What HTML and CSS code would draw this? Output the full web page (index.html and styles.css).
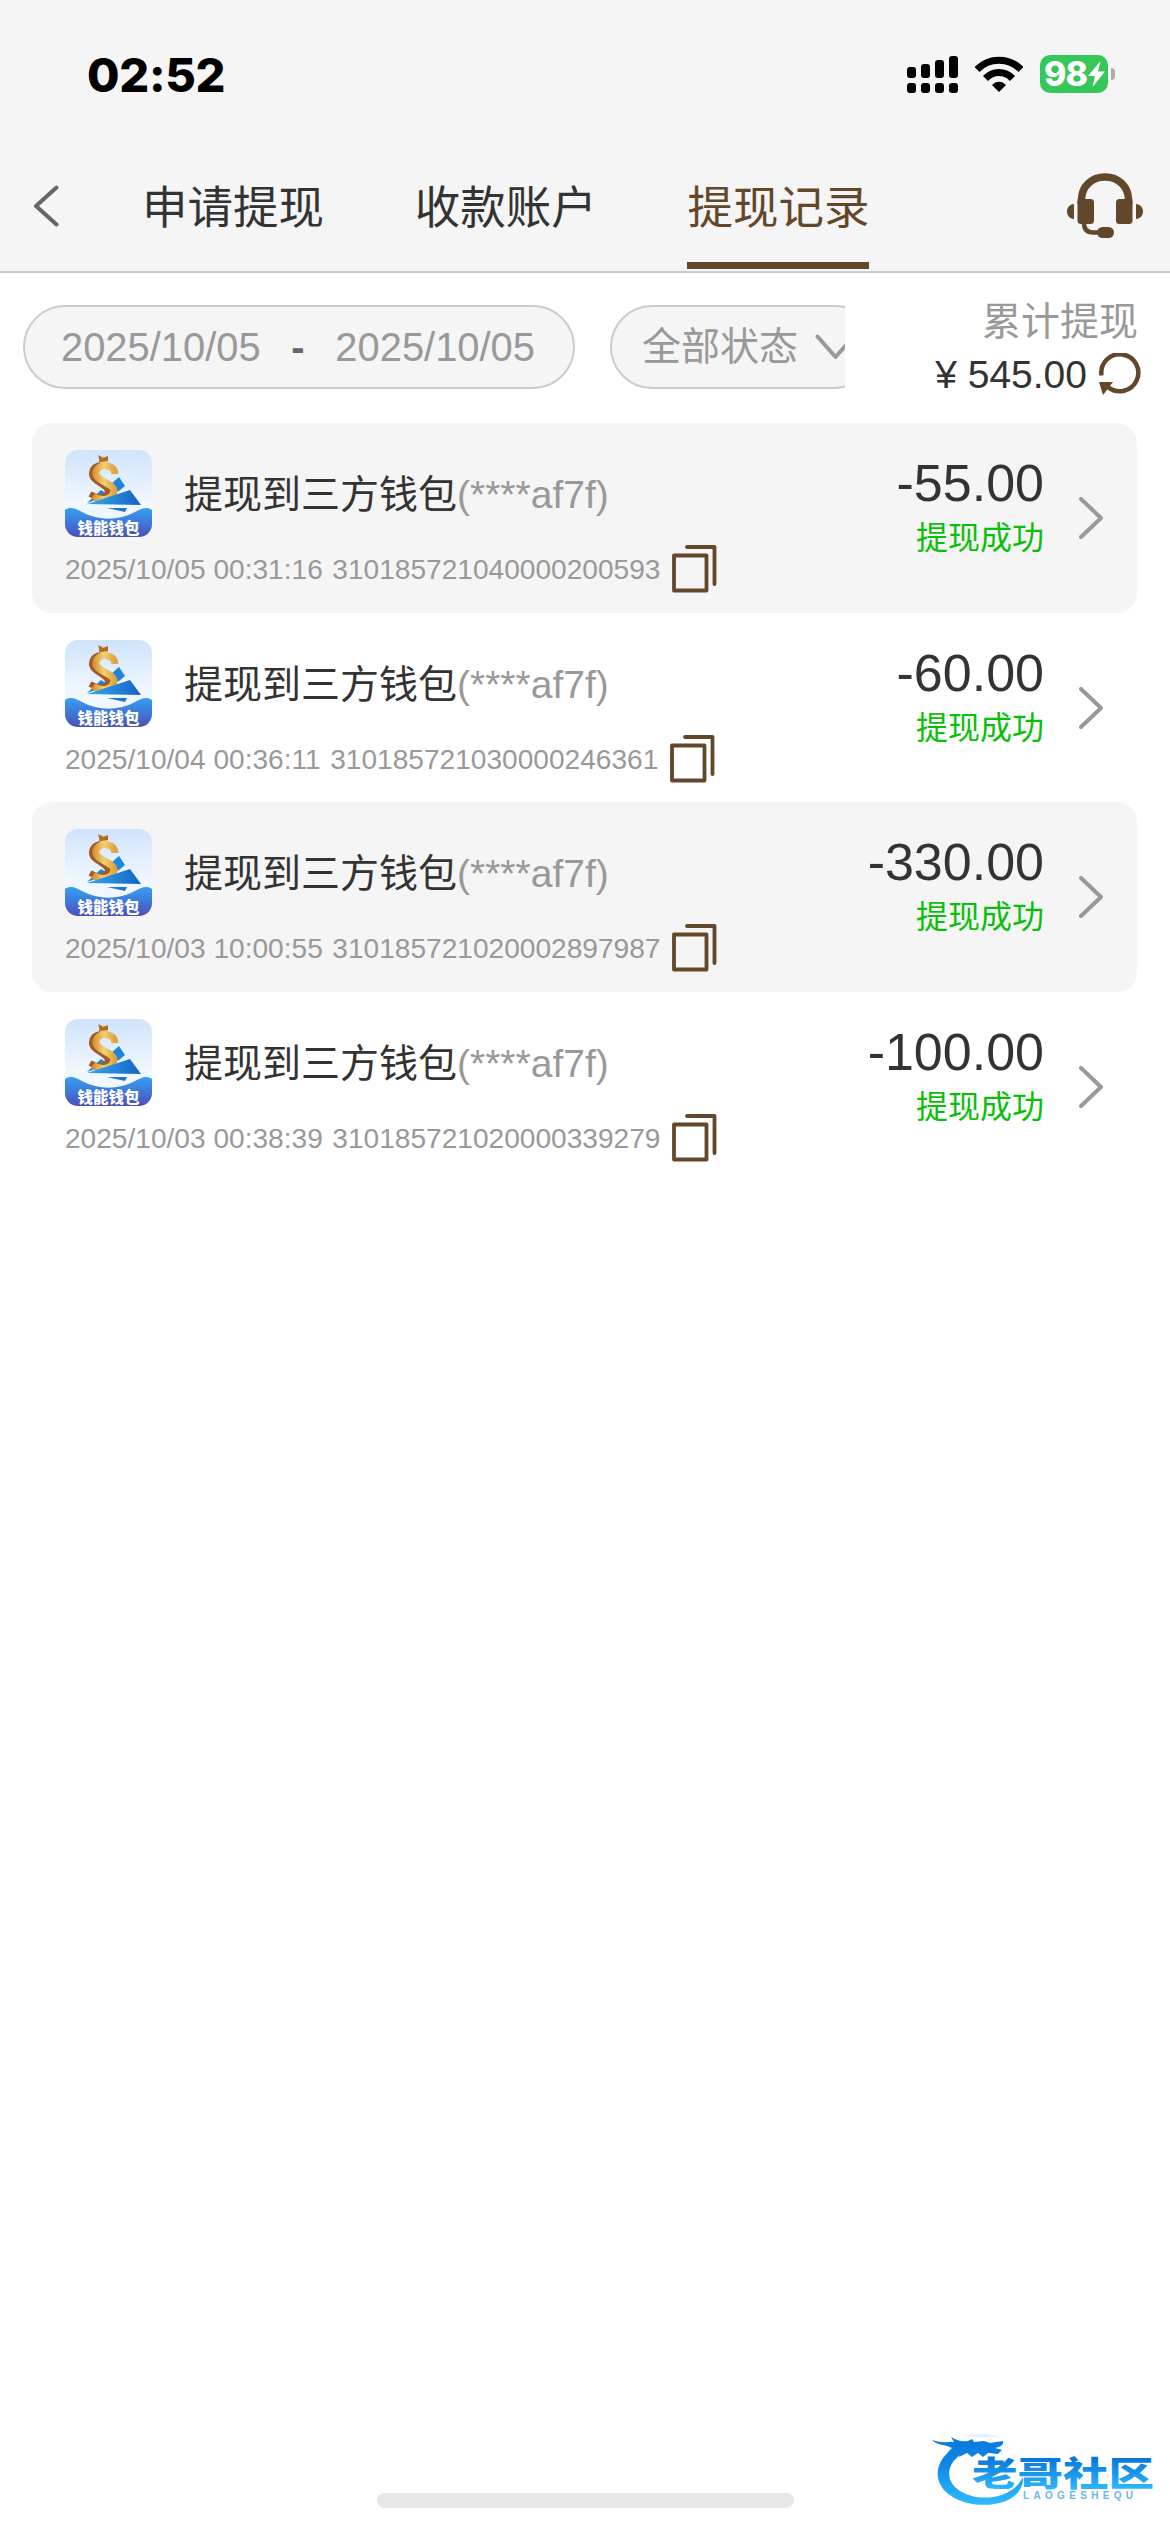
FILE: index.html
```html
<!DOCTYPE html>
<html lang="zh-CN">
<head>
    <meta charset="UTF-8">
    <meta name="viewport" content="width=device-width, initial-scale=1.0">
    <title>提现记录</title>
    <link rel="stylesheet" href="styles.css">
</head>
<body>
    <!-- shared icons -->
    <svg class="sprite" width="0" height="0">
        <defs>
            <linearGradient id="sky" x1="0" y1="0" x2="0" y2="1">
                <stop offset="0" stop-color="#cfe4fc"/>
                <stop offset="0.6" stop-color="#f1f7fe"/>
            </linearGradient>
            <linearGradient id="wave" x1="0" y1="0" x2="0" y2="1">
                <stop offset="0" stop-color="#36a0f0"/>
                <stop offset="0.55" stop-color="#3f74d6"/>
                <stop offset="1" stop-color="#4f50b4"/>
            </linearGradient>
            <linearGradient id="gold" x1="0" y1="0" x2="1" y2="0">
                <stop offset="0" stop-color="#d98f2e"/>
                <stop offset="0.5" stop-color="#f3cf74"/>
                <stop offset="1" stop-color="#dfa23e"/>
            </linearGradient>
            <linearGradient id="sail" x1="0" y1="0" x2="1" y2="0">
                <stop offset="0" stop-color="#35a9ee"/>
                <stop offset="1" stop-color="#1563c4"/>
            </linearGradient>
        </defs>
        <symbol id="icon-wallet" viewBox="0 0 87 87">
            <rect width="87" height="87" fill="url(#sky)"/>
            <path d="M46 34l8-7 6 9-6 5-9 4zM22 53l14-13 8 5z" fill="#1e86dc"/>
            <path d="M44 17C38 13 28 15 27 23c-1 9 16 11 16 19-1 6-9 7-18 2M37 14l1-7" fill="none" stroke="#a05a28" stroke-width="6"/>
            <path d="M50 24C49 13 33 13 31 22c-2 9 18 11 18 19-1 9-13 11-21 5M38 14l2-7" fill="none" stroke="url(#gold)" stroke-width="7"/>
            <path d="M33 5l5 3 5-2v5l-8 1z" fill="#b26a27"/>
            <path d="M22 54L65 40 76 55z" fill="url(#sail)"/>
            <path d="M42 58h20l-2 4z" fill="#1d78d4"/>
            <path d="M0 60c6-4 11-1 17 2 17 9 36 9 53 0 6-3 11-6 17-2v27H0z" fill="url(#wave)"/>
        </symbol>
        <symbol id="icon-copy" viewBox="0 0 45 48">
            <path d="M2 10.500h32.500V45.500H2zM15 2h27.500v37" fill="none" stroke="#63472a" stroke-width="3.800" stroke-linecap="round" stroke-linejoin="round"/>
        </symbol>
        <symbol id="icon-arrow" viewBox="0 0 24 42">
            <path d="M2 2l20 19L2 40" fill="none" stroke="#999" stroke-width="4" stroke-linecap="round" stroke-linejoin="round"/>
        </symbol>
    </svg>

    <header class="header">
        <div class="status-bar">
            <span class="time">02:52</span>
            <div class="status-icons">
                <svg class="signal" viewBox="0 0 51 37">
                    <rect x="0" y="11" width="9" height="11" rx="3"/>
                    <rect x="14" y="8" width="9" height="14" rx="3"/>
                    <rect x="28" y="4" width="9" height="18" rx="3"/>
                    <rect x="42" y="0" width="9" height="22" rx="3"/>
                    <rect x="0" y="27" width="9" height="10" rx="3"/>
                    <rect x="14" y="27" width="9" height="10" rx="3"/>
                    <rect x="28" y="27" width="9" height="10" rx="3"/>
                    <rect x="42" y="27" width="9" height="10" rx="3"/>
                </svg>
                <svg class="wifi" viewBox="0 0 48 36">
                    <path d="M2 13.500C14 1 34 1 46 13.500M10.500 22.500C18 14.500 30 14.500 37.500 22.500" fill="none" stroke="#000" stroke-width="7"/>
                    <path d="M17 29c4-4.500 10-4.500 14 0l-7 7z"/>
                </svg>
                <div class="battery">
                    <span>98</span>
                    <svg class="bolt" viewBox="0 0 17 26"><path d="M12.500 0L0 15h7L4.500 26 17 10.500h-7z"/></svg>
                </div>
                <i class="battery-cap"></i>
            </div>
        </div>
        <nav class="nav">
            <svg class="back" viewBox="0 0 26 42"><path d="M23.500 2.500L3 21l20.500 18.500"/></svg>
            <div class="tabs">
                <a class="tab">申请提现</a>
                <a class="tab">收款账户</a>
                <a class="tab active">提现记录</a>
            </div>
            <svg class="service" viewBox="0 0 76 65">
                <path d="M14.500 30v-3C14.500 13 25 4 38 4s23.500 9 23.500 23v3" fill="none" stroke="#63472a" stroke-width="7.500"/>
                <rect x="10.500" y="26" width="16.500" height="25" rx="3.500"/>
                <rect x="49" y="26" width="16.500" height="25" rx="3.500"/>
                <path d="M10.700 26h7v6h-7zM58.300 26h7v6h-7z"/>
                <path d="M7 31v15C2.500 45.500 0 42.500 0 38.500S2.500 31.500 7 31zM69 31v15c4.500-.5 7-3.500 7-7.500s-2.500-7-7-7.500z"/>
                <path d="M17 50c0 6 3 9.500 9 9.500h7" fill="none" stroke="#63472a" stroke-width="4.500"/>
                <rect x="30" y="54" width="17" height="11" rx="5.500"/>
            </svg>
        </nav>
    </header>

    <section class="filters">
        <div class="date-range">
            <span>2025/10/05</span>
            <span class="dash">-</span>
            <span>2025/10/05</span>
        </div>
        <div class="status-wrap">
            <div class="status-select">
                <span>全部状态</span>
                <svg class="down" viewBox="0 0 41 26"><path d="M2.500 2.500L20.500 23 38.500 2.500"/></svg>
            </div>
        </div>
        <div class="total">
            <div class="total-label">累计提现</div>
            <div class="total-value">
                <span>¥ 545.00</span>
                <svg class="refresh" viewBox="0 0 42 42">
                    <path d="M2.500 22.500A18.500 18.500 0 1 1 9 34" fill="none" stroke="#63472a" stroke-width="4.500"/>
                    <path d="M0 29h14L4 42z" fill="#63472a"/>
                </svg>
            </div>
        </div>
    </section>

    <main class="list">
        <div class="record">
            <div class="logo"><svg><use href="#icon-wallet"/></svg><span>钱能钱包</span></div>
            <div class="title">提现到三方钱包<span>(****af7f)</span></div>
            <div class="meta"><span>2025/10/05 00:31:16</span><span>310185721040000200593</span><svg class="copy"><use href="#icon-copy"/></svg></div>
            <div class="amount"><b>-55.00</b><em>提现成功</em></div>
            <svg class="arrow"><use href="#icon-arrow"/></svg>
        </div>
        <div class="record">
            <div class="logo"><svg><use href="#icon-wallet"/></svg><span>钱能钱包</span></div>
            <div class="title">提现到三方钱包<span>(****af7f)</span></div>
            <div class="meta"><span>2025/10/04 00:36:11</span><span>310185721030000246361</span><svg class="copy"><use href="#icon-copy"/></svg></div>
            <div class="amount"><b>-60.00</b><em>提现成功</em></div>
            <svg class="arrow"><use href="#icon-arrow"/></svg>
        </div>
        <div class="record">
            <div class="logo"><svg><use href="#icon-wallet"/></svg><span>钱能钱包</span></div>
            <div class="title">提现到三方钱包<span>(****af7f)</span></div>
            <div class="meta"><span>2025/10/03 10:00:55</span><span>310185721020002897987</span><svg class="copy"><use href="#icon-copy"/></svg></div>
            <div class="amount"><b>-330.00</b><em>提现成功</em></div>
            <svg class="arrow"><use href="#icon-arrow"/></svg>
        </div>
        <div class="record">
            <div class="logo"><svg><use href="#icon-wallet"/></svg><span>钱能钱包</span></div>
            <div class="title">提现到三方钱包<span>(****af7f)</span></div>
            <div class="meta"><span>2025/10/03 00:38:39</span><span>310185721020000339279</span><svg class="copy"><use href="#icon-copy"/></svg></div>
            <div class="amount"><b>-100.00</b><em>提现成功</em></div>
            <svg class="arrow"><use href="#icon-arrow"/></svg>
        </div>
    </main>

    <div class="home-bar"></div>

    <svg class="watermark" viewBox="0 0 230 80">
        <defs>
            <linearGradient id="mark" gradientUnits="userSpaceOnUse" x1="0" y1="5" x2="0" y2="75">
                <stop offset="0" stop-color="#0a78dc"/>
                <stop offset="0.4" stop-color="#0f86e6"/>
                <stop offset="1" stop-color="#2fbcff"/>
            </linearGradient>
            <linearGradient id="markText" gradientUnits="userSpaceOnUse" x1="0" y1="29" x2="0" y2="58">
                <stop offset="0" stop-color="#0878dc"/>
                <stop offset="1" stop-color="#2bb5fd"/>
            </linearGradient>
        </defs>
        <path d="M30 15C-2 29-1 66 42 74c28 4 52-6 51-27-7 15-26 23-47 20C14 61 10 34 37 21z" fill="url(#mark)"/>
        <path d="M2 10c8 3 14 2 22 2l-3-5c7 4 11 5 17 4l4-2 2 3 10-1 6 2 13-2c1 4-3 6-8 7l7 2-4 4-10-1-5 4-5-4-6 4-5-4-8 4 2-7c-6 0-10 2-14 3l5-5C14 14 6 15 2 10z" fill="url(#mark)"/>
        <path d="M28 3c12 5 26-4 42 5-12-3-24 3-42-5z" fill="#e3f1fc"/>
        <text class="mark-name" x="42" y="56" textLength="182" lengthAdjust="spacingAndGlyphs" fill="url(#markText)">老哥社区</text>
        <text class="mark-sub" x="93" y="68.500" textLength="110">LAOGESHEQU</text>
    </svg>
</body>
</html>
```
FILE: styles.css
```css
* {
    box-sizing: border-box;
}
body {
    position: relative;
    margin: 0;
    height: 2532px;
    overflow: hidden;
    background: #fff;
    color: #333;
    font-family: "Liberation Sans", "Noto Sans CJK SC", sans-serif;
}
svg {
    display: block;
    flex: none;
}
.sprite {
    position: absolute;
}
.header {
    height: 273px;
    background: #f5f5f5;
    border-bottom: 2px solid #ccc;
}

/* status bar */
.status-bar {
    display: flex;
    justify-content: space-between;
    height: 141px;
    padding: 55px 55px 0 87px;
}
.time {
    font: 800 47px/39px Inter, sans-serif;
    letter-spacing: -0.300px;
    color: #000;
}
.status-icons {
    display: flex;
    height: 38px;
    align-items: center;
}
.signal {
    width: 51px;
    height: 37px;
    margin-right: 17px;
}
.wifi {
    width: 48px;
    height: 36px;
    margin-right: 17px;
}
.battery {
    display: flex;
    align-items: center;
    width: 68px;
    height: 38px;
    padding-left: 4px;
    border-radius: 10px;
    background: #35c759;
    color: #fff;
    font: 800 34px/38px Inter, sans-serif;
    letter-spacing: -1px;
}
.battery span {
    width: 44px;
}
.bolt {
    width: 17px;
    height: 26px;
    fill: #fff;
}
.battery-cap {
    width: 4px;
    height: 12px;
    margin-left: 3px;
    border-radius: 0 4px 4px 0;
    background: #aaa;
}

/* nav */
.nav {
    display: flex;
    height: 130px;
    padding: 0 27px 0 33px;
}
.back {
    width: 26px;
    height: 42px;
    margin-top: 44px;
}
.back path {
    fill: none;
    stroke: #666;
    stroke-width: 4;
    stroke-linecap: round;
    stroke-linejoin: round;
}
.tabs {
    display: flex;
    gap: 90.700px;
    margin-left: 83px;
}
.tab {
    height: 128px;
    font-size: 45.500px;
    line-height: 135px;
}
.tab.active {
    color: #63472a;
    border-bottom: 7px solid #63472a;
}
.service {
    width: 76px;
    height: 65px;
    margin: 32px 0 0 auto;
    fill: #63472a;
}

/* filters */
.filters {
    display: flex;
    height: 150px;
    padding: 32px 29px 0 23px;
    color: #999;
    font-size: 39px;
}
.date-range,
.status-select {
    display: flex;
    align-items: center;
    height: 84px;
    border: 2px solid #ccc;
    border-radius: 42px;
    background: #f5f5f5;
}
.date-range {
    width: 552px;
    justify-content: space-between;
    padding: 0 38px 0 36px;
    font-size: 39.900px;
}
.dash {
    color: #666;
    font-weight: bold;
}
.status-wrap {
    width: 235px;
    margin-left: 35px;
    overflow: hidden;
}
.status-select {
    width: 266px;
    padding-left: 30px;
    line-height: 52px;
}
.down {
    width: 41px;
    height: 26px;
    margin: 0 0 0 17px;
}
.down path {
    fill: none;
    stroke: #999;
    stroke-width: 4;
    stroke-linecap: round;
    stroke-linejoin: round;
}
.total {
    margin-left: auto;
}
.total-label {
    height: 42px;
    margin-right: 3px;
    line-height: 33px;
    text-align: right;
}
.total-value {
    display: flex;
    align-items: center;
    gap: 12px;
    height: 54px;
    color: #333;
}
.total-value span {
    padding-top: 1px;
}
.refresh {
    width: 42px;
    height: 42px;
}

/* records */
.list {
    margin: 0 33px 0 32px;
}
.record {
    display: grid;
    grid-template-columns: 119px 1fr auto 93px;
    grid-template-rows: 87px 1fr;
    height: 189.500px;
    padding: 27px 0 11px 33px;
    border-radius: 20px;
}
.record:nth-child(odd) {
    background: #f5f5f5;
}
.logo {
    position: relative;
    width: 87px;
    height: 87px;
    border-radius: 13px;
    overflow: hidden;
}
.logo svg {
    width: 87px;
    height: 87px;
}
.logo span {
    position: absolute;
    left: 0;
    right: 0;
    bottom: 0;
    color: #fff;
    font: 900 15.500px/19px "Noto Sans CJK SC", sans-serif;
    text-align: center;
}
.title {
    font-size: 39px;
    line-height: 89px;
    white-space: nowrap;
}
.title span {
    color: #999;
}
.meta {
    grid-column: 1 / 3;
    grid-row: 2;
    display: flex;
    align-items: center;
    color: #999;
    font-size: 28.100px;
    white-space: nowrap;
}
.meta span {
    padding-top: 2px;
}
.meta span + span {
    margin-left: 9.500px;
}
.copy {
    width: 45px;
    height: 48px;
    margin-left: 12px;
}
.amount {
    grid-column: 3;
    grid-row: 1 / 3;
    display: flex;
    flex-direction: column;
    align-items: flex-end;
}
.amount b {
    font-size: 52px;
    font-weight: normal;
    line-height: 66px;
}
.amount em {
    font-size: 32px;
    font-style: normal;
    line-height: 44px;
    color: #0abf0a;
}
.arrow {
    grid-column: 4;
    grid-row: 1 / 3;
    width: 24px;
    height: 42px;
    margin: 47px 0 0 35px;
}

/* overlays */
.home-bar {
    position: absolute;
    left: 377px;
    bottom: 24px;
    width: 417px;
    height: 15px;
    border-radius: 8px;
    background: #e7e7e7;
}
.watermark {
    position: absolute;
    left: 930px;
    top: 2430px;
    width: 230px;
    height: 80px;
}
.mark-name {
    font: 900 34px "Noto Sans CJK SC", sans-serif;
}
.mark-sub {
    font: bold 10px "Liberation Sans", sans-serif;
    fill: #6fb4ea;
}
```
